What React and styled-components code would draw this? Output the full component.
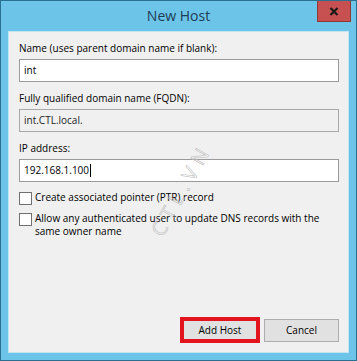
import React from "react";
import styled, { createGlobalStyle } from "styled-components";

const Global = createGlobalStyle`
  html, body { margin: 0; padding: 0; background: #ffffff; }
  body { font-family: "Open Sans", "Noto Sans", sans-serif; }
  * { box-sizing: border-box; }
`;

const Window = styled.div`
  width: 357px;
  height: 361px;
  background: #6cc4e8;
  border: 1px solid #2a6f90;
  display: flex;
  flex-direction: column;
  font-family: "Open Sans", "Noto Sans", sans-serif;
  font-size: 10px;
  color: #000;
`;

const TitleBar = styled.div`
  height: 30px;
  flex: none;
  display: grid;
  grid-template-columns: 1fr auto 1fr;
  align-items: start;
`;

const Title = styled.div`
  grid-column: 2;
  font-size: 14px;
  line-height: 30px;
  color: #1d3c55;
`;

const CloseButton = styled.div`
  grid-column: 3;
  justify-self: end;
  margin-right: 5px;
  width: 34px;
  height: 21px;
  background: #c75050;
  border: 1px solid #8e3b37;
  border-top: none;
  display: flex;
  align-items: center;
  justify-content: center;
`;

const Client = styled.div`
  flex: 1;
  margin: 0 7px 7px 7px;
  background: #f0f0f0;
  border: 1px solid #c2e5f3;
  display: flex;
  flex-direction: column;
  padding: 10px 9px 9px 10px;
  position: relative;
`;

const Field = styled.div`
  display: flex;
  flex-direction: column;
  margin-bottom: 10px;
`;

const Label = styled.div`
  line-height: 13px;
  margin-bottom: 4px;
  white-space: nowrap;
`;

const Box = styled.div`
  height: 23px;
  border: 1px solid ${(p) => (p.$readOnly ? "#a8a8a8" : "#9a9a9a")};
  background: ${(p) => (p.$readOnly ? "#f0f0f0" : "#ffffff")};
  display: flex;
  align-items: center;
  padding: 0 4px;
  line-height: 13px;
  color: ${(p) => (p.$readOnly ? "#222" : "#000")};
`;

const Caret = styled.span`
  display: inline-block;
  width: 1px;
  height: 13px;
  background: #000;
  margin-left: 1px;
`;

const Checks = styled.div`
  display: flex;
  flex-direction: column;
  gap: 7px;
  margin-top: -1px;
`;

const CheckRow = styled.div`
  display: flex;
  align-items: flex-start;
  gap: 3px;
  line-height: 13px;
`;

const CheckBox = styled.span`
  flex: none;
  width: 13px;
  height: 13px;
  margin-top: 1px;
  border: 1px solid #707070;
  background: #ffffff;
`;

const ButtonRow = styled.div`
  margin-top: auto;
  display: flex;
  justify-content: flex-end;
  align-items: center;
  gap: 4px;
`;

const Button = styled.div`
  width: ${(p) => (p.$highlight ? "80px" : "75px")};
  height: ${(p) => (p.$highlight ? "26px" : "23px")};
  background: #e1e1e1;
  border: ${(p) => (p.$highlight ? "4px solid #e2141d" : "1px solid #adadad")};
  display: flex;
  align-items: center;
  justify-content: center;
  line-height: 13px;
`;

const Watermark = styled.div`
  position: absolute;
  left: 118px;
  top: 144px;
  width: 108px;
  text-align: center;
  font-size: 20px;
  line-height: 27px;
  letter-spacing: 6px;
  color: transparent;
  -webkit-text-stroke: 0.6px #bdbdbd;
  transform: rotate(-61deg);
  transform-origin: center;
  pointer-events: none;
`;

export default function App() {
  return (
    <>
      <Global />
      <Window>
        <TitleBar>
          <Title>New Host</Title>
          <CloseButton>
            <svg width="10" height="9" viewBox="0 0 10 9">
              <path d="M1.5 1 L8.5 8 M8.5 1 L1.5 8" stroke="#1a1a1a" strokeWidth="2.2" />
            </svg>
          </CloseButton>
        </TitleBar>
        <Client>
          <Field>
            <Label>Name (uses parent domain name if blank):</Label>
            <Box>int</Box>
          </Field>
          <Field>
            <Label>Fully qualified domain name (FQDN):</Label>
            <Box $readOnly>int.CTL.local.</Box>
          </Field>
          <Field>
            <Label>IP address:</Label>
            <Box>
              192.168.1.100
              <Caret />
            </Box>
          </Field>
          <Checks>
            <CheckRow>
              <CheckBox />
              <span>Create associated pointer (PTR) record</span>
            </CheckRow>
            <CheckRow>
              <CheckBox />
              <span>
                Allow any authenticated user to update DNS records with the
                <br />
                same owner name
              </span>
            </CheckRow>
          </Checks>
          <ButtonRow>
            <Button $highlight>Add Host</Button>
            <Button>Cancel</Button>
          </ButtonRow>
          <Watermark>CTL.VN</Watermark>
        </Client>
      </Window>
    </>
  );
}
